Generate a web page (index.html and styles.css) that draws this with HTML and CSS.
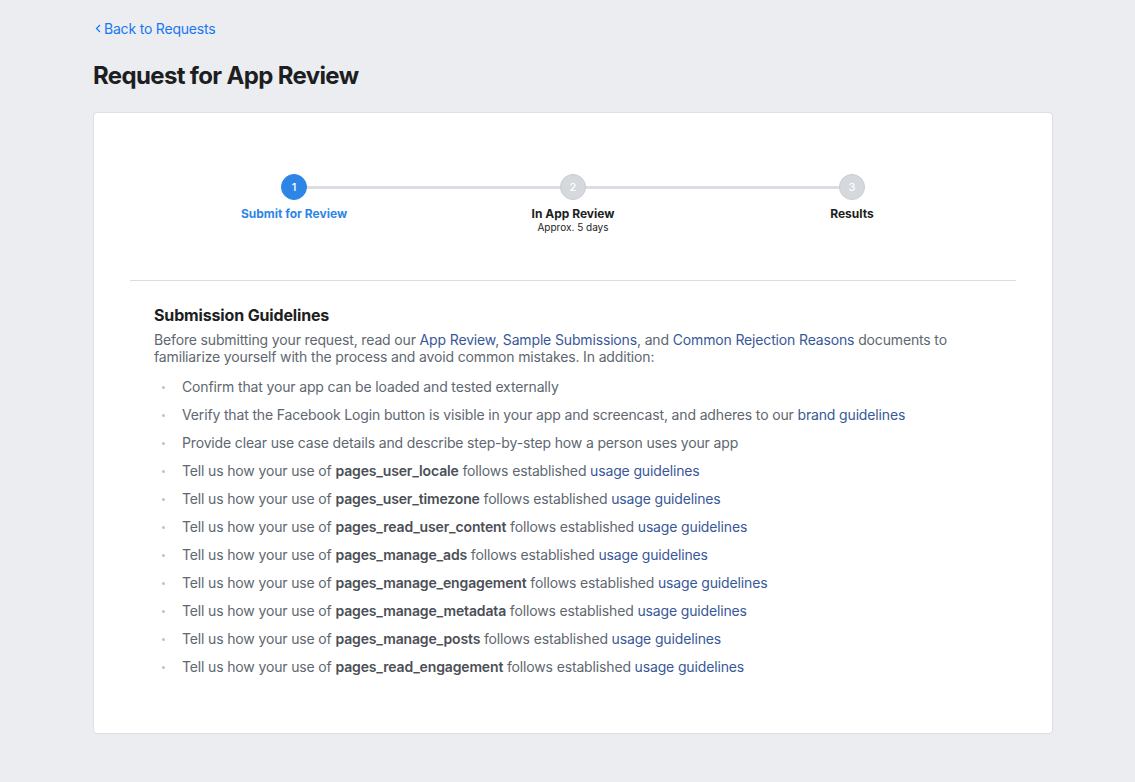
FILE: index.html
```html
<!DOCTYPE html>
<html>
<head>
<meta charset="utf-8">
<link rel="stylesheet" href="styles.css">
</head>
<body>
<div class="page">
  <a class="back" href="#"><svg class="chev" width="6" height="9" viewBox="0 0 6 9"><path d="M5 1 L1.5 4.5 L5 8" fill="none" stroke="currentColor" stroke-width="1.2"/></svg>Back to Requests</a>
  <h1 class="title">Request for App Review</h1>
  <div class="card">
    <div class="stepper">
      <div class="step active">
        <div class="circle">1</div>
        <div class="label">Submit for Review</div>
      </div>
      <div class="step">
        <div class="circle">2</div>
        <div class="label">In App Review</div>
        <div class="sub">Approx. 5 days</div>
      </div>
      <div class="step">
        <div class="circle">3</div>
        <div class="label">Results</div>
      </div>
    </div>
    <div class="divider"></div>
    <div class="content">
      <h2 class="heading">Submission Guidelines</h2>
      <p class="intro">Before submitting your request, read our <a href="#">App Review</a>, <a href="#">Sample Submissions</a>, and <a href="#">Common Rejection Reasons</a> documents to familiarize yourself with the process and avoid common mistakes. In addition:</p>
      <ul class="list">
        <li>Confirm that your app can be loaded and tested externally</li>
        <li>Verify that the Facebook Login button is visible in your app and screencast, and adheres to our <a href="#">brand guidelines</a></li>
        <li>Provide clear use case details and describe step-by-step how a person uses your app</li>
        <li>Tell us how your use of <b>pages_user_locale</b> follows established <a href="#">usage guidelines</a></li>
        <li>Tell us how your use of <b>pages_user_timezone</b> follows established <a href="#">usage guidelines</a></li>
        <li>Tell us how your use of <b>pages_read_user_content</b> follows established <a href="#">usage guidelines</a></li>
        <li>Tell us how your use of <b>pages_manage_ads</b> follows established <a href="#">usage guidelines</a></li>
        <li>Tell us how your use of <b>pages_manage_engagement</b> follows established <a href="#">usage guidelines</a></li>
        <li>Tell us how your use of <b>pages_manage_metadata</b> follows established <a href="#">usage guidelines</a></li>
        <li>Tell us how your use of <b>pages_manage_posts</b> follows established <a href="#">usage guidelines</a></li>
        <li>Tell us how your use of <b>pages_read_engagement</b> follows established <a href="#">usage guidelines</a></li>
      </ul>
    </div>
  </div>
</div>
</body>
</html>
```
FILE: styles.css
```css
html, body {
  margin: 0;
  padding: 0;
  background: #ebedf0;
  font-family: Inter, "Liberation Sans", Arial, sans-serif;
  color: #606770;
}
.page {
  width: 960px;
  margin-left: 93px;
  padding-top: 17px;
}
.back {
  display: inline-flex;
  align-items: center;
  gap: 2px;
  margin-left: 2px;
  font-size: 14px;
  line-height: 18px;
  color: #1877f2;
  text-decoration: none;
  letter-spacing: -0.2px;
}
.chev { margin-right: 1px; }
.title {
  margin: 24px 0 22px;
  font-size: 24px;
  line-height: 28px;
  font-weight: 700;
  color: #1c1e21;
  letter-spacing: -0.65px;
}
.card {
  background: #fff;
  border: 1px solid #dddfe2;
  border-radius: 4px;
  padding: 61px 36px 57px;
  box-sizing: border-box;
  height: 622px;
}
.stepper {
  position: relative;
  display: grid;
  grid-template-columns: repeat(3, 279px);
  justify-content: center;
  margin-left: -36px;
  margin-right: -36px;
  height: 106px;
}
.stepper::before {
  content: "";
  position: absolute;
  top: 12px;
  left: 201px;
  right: 201px;
  height: 3px;
  background: #dadde1;
}
.step {
  position: relative;
  display: flex;
  flex-direction: column;
  align-items: center;
}
.circle {
  width: 26px;
  height: 26px;
  border-radius: 50%;
  background: #d5d8dc;
  color: #fff;
  font-size: 11px;
  font-weight: 500;
  display: flex;
  align-items: center;
  justify-content: center;
  box-sizing: border-box;
  border: 1px solid #c9ccd1;
}
.step.active .circle {
  background: #2d86e6;
  border-color: #2d86e6;
}
.label {
  margin-top: 6px;
  font-size: 12px;
  line-height: 16px;
  font-weight: 700;
  color: #1c1e21;
}
.step.active .label { color: #2d86e6; }
.sub {
  font-size: 10px;
  line-height: 11px;
  color: #1c1e21;
}
.divider {
  height: 1px;
  background: #dadde1;
}
.content {
  padding: 24px 24px 0;
  letter-spacing: -0.15px;
}
.heading {
  margin: 0;
  font-size: 16px;
  line-height: 20px;
  font-weight: 700;
  color: #1c1e21;
}
.intro {
  margin: 6px 0 0;
  font-size: 14px;
  line-height: 17px;
}
a { color: #385898; text-decoration: none; }
.list {
  list-style: none;
  margin: 13px 0 0;
  padding: 0;
}
.list li {
  position: relative;
  font-size: 14px;
  line-height: 18px;
  padding-left: 28px;
  margin-bottom: 10px;
}
.list li::before {
  content: "";
  position: absolute;
  left: 8px;
  top: 8px;
  width: 3px;
  height: 3px;
  border-radius: 50%;
  background: #bec3c9;
}
.list b { color: #4b4f56; font-weight: 600; }
```
